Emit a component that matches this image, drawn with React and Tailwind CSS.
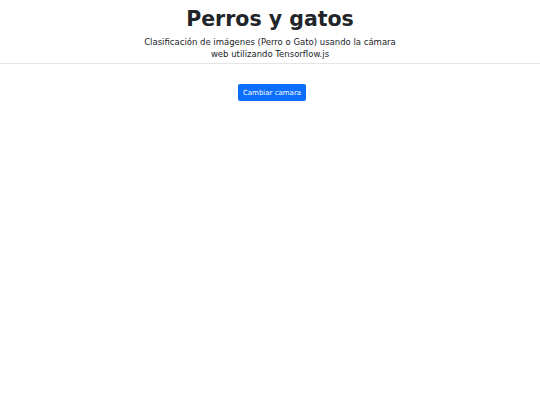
export default function App() {
  return (
    <div className="min-h-screen bg-white font-['DejaVu_Sans',sans-serif] text-[#212529]">
      <header className="border-b border-[#e5e5e5] pt-[5px] pb-[3px] text-center">
        <h1 className="text-[20.5px] font-bold leading-[28px]">Perros y gatos</h1>
        <p className="mx-auto mt-[3px] w-[260px] text-[8.5px] leading-[12px]">
          Clasificación de imágenes (Perro o Gato) usando la cámara web utilizando Tensorflow.js
        </p>
      </header>
      <div className="flex justify-center pt-[20px]">
        <button className="ml-[4px] rounded-[2px] bg-[#0d6efd] px-[5px] py-[3.5px] text-[7px] leading-[10px] text-white">
          Cambiar camara
        </button>
      </div>
    </div>
  );
}
